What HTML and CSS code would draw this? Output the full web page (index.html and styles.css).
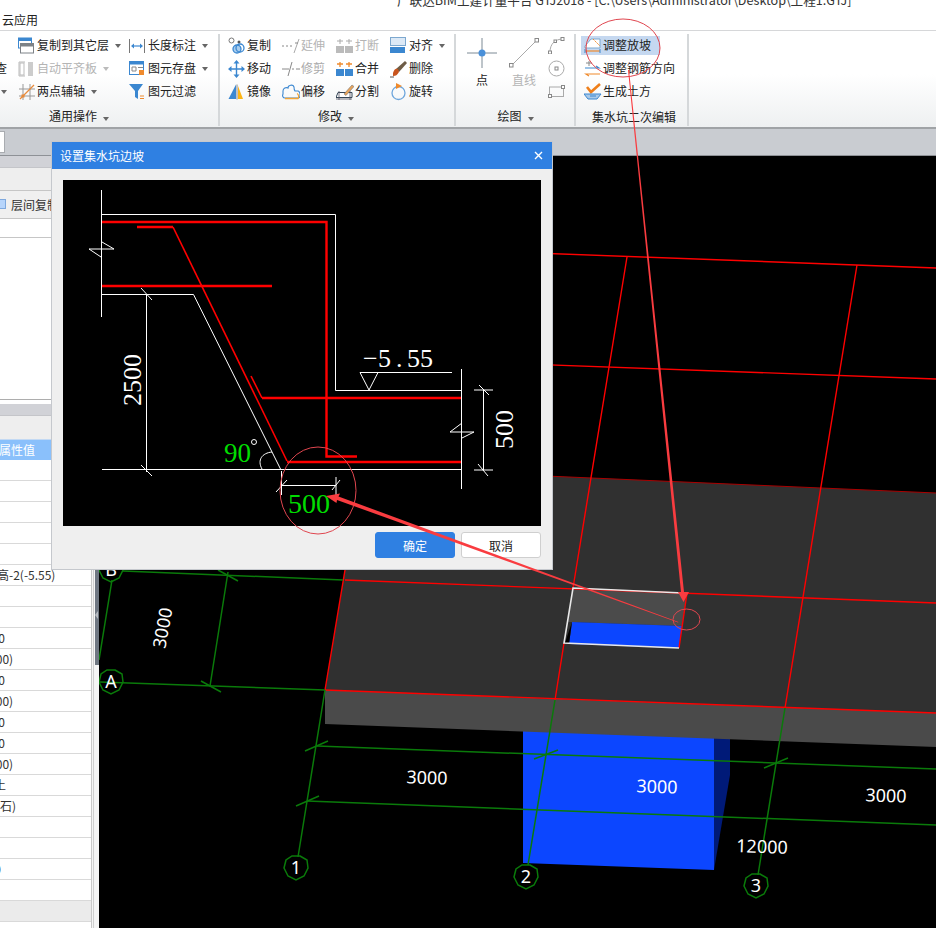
FILE: index.html
```html
<!DOCTYPE html>
<html lang="zh-CN">
<head>
<meta charset="utf-8">
<title>广联达BIM土建计量平台 GTJ2018</title>
<link rel="stylesheet" href="styles.css">
</head>
<body>
<div class="app">
  <div class="titlebar"><span>广联达BIM土建计量平台 GTJ2018 - [C:\Users\Administrator\Desktop\工程1.GTJ]</span></div>
  <div class="menubar">云应用</div>

  <div class="ribbon">
    <section class="group g1">
      <div class="cols">
        <div class="col c0">
          <div class="tool"></div>
          <div class="tool"><span>查</span></div>
          <div class="tool"><i class="caret"></i></div>
        </div>
        <div class="col c1">
          <div class="tool"><svg class="ico" viewBox="0 0 18 18"><rect x=".5" y="1" width="13" height="10" fill="#fff" stroke="#3b87d0"/><rect x=".5" y="1" width="13" height="3" fill="#3b87d0"/><rect x="2.5" y="6.5" width="13" height="9.5" fill="#fff" stroke="#7d8287"/><rect x="2.5" y="6.5" width="13" height="3" fill="#7d8287"/></svg><span>复制到其它层</span><i class="caret"></i></div>
          <div class="tool off"><svg class="ico" viewBox="0 0 18 18"><path d="M1 2v14M1 2h6M1 16h6" fill="none" stroke="#bbb"/><rect x="2" y="3" width="4" height="12" fill="#fff" stroke="#bbb"/><rect x="10" y="2" width="5" height="14" fill="#ccc"/></svg><span>自动平齐板</span><i class="caret"></i></div>
          <div class="tool"><svg class="ico" viewBox="0 0 18 18"><path d="M1 6h16M1 13h16M5 1v16M12 1v16" stroke="#999" fill="none"/><path d="M2 16L16 2" stroke="#e88a3a" stroke-width="1.2"/><rect x="3.5" y="11.5" width="3" height="3" fill="#e88a3a"/></svg><span>两点辅轴</span><i class="caret"></i></div>
        </div>
        <div class="col c2">
          <div class="tool"><svg class="ico" viewBox="0 0 18 18"><path d="M.5 2v14M15.5 2v14" stroke="#777" fill="none"/><path d="M3 9h10" stroke="#3b87d0" stroke-width="1.2"/><path d="M2 9l3-2.5v5zM14 9l-3-2.5v5z" fill="#3b87d0"/></svg><span>长度标注</span><i class="caret"></i></div>
          <div class="tool"><svg class="ico" viewBox="0 0 18 18"><rect x=".5" y="1.500" width="14" height="13" fill="#fff" stroke="#3b87d0"/><rect x=".5" y="1.500" width="14" height="3" fill="#3b87d0"/><path d="M3 7h4v4H3z" fill="none" stroke="#888"/><rect x="10" y="10" width="5" height="5" fill="#ef8a2c"/><rect x="9" y="7" width="5" height="1" fill="#888"/></svg><span>图元存盘</span><i class="caret"></i></div>
          <div class="tool"><svg class="ico" viewBox="0 0 18 18"><path d="M0 1h14L9 8v8L6 14V8z" fill="#3b87d0"/><path d="M11 13h4M11 15.500h4" stroke="#ef8a2c"/></svg><span>图元过滤</span></div>
        </div>
      </div>
      <div class="label">通用操作<i class="caret"></i></div>
    </section>

    <section class="group g2">
      <div class="cols">
        <div class="col c54">
          <div class="tool"><svg class="ico" viewBox="0 0 18 18"><circle cx="3.500" cy="3.500" r="2.500" fill="#fff" stroke="#777"/><circle cx="11" cy="5" r="1.500" fill="#555"/><circle cx="9" cy="12" r="4" fill="#a8cdee" stroke="#3b87d0" stroke-width="1.300"/><circle cx="12" cy="11" r="4" fill="none" stroke="#3b87d0" stroke-width="1.300"/></svg><span>复制</span></div>
          <div class="tool"><svg class="ico" viewBox="0 0 18 18"><path d="M8.500 3v12M2.500 9h12" stroke="#3b87d0" stroke-width="1.400"/><path d="M8.500 0l3 3.500h-6zM8.500 18l3-3.500h-6zM0 9l3.500-3v6zM17 9l-3.500-3v6z" fill="#3b87d0"/></svg><span>移动</span></div>
          <div class="tool"><svg class="ico" viewBox="0 0 18 18"><path d="M8 1.500v14.500H.5z" fill="#3b87d0"/><path d="M9 1.500v15" stroke="#888"/><path d="M10 3v13h5z" fill="#fcb414"/></svg><span>镜像</span></div>
        </div>
        <div class="col c54">
          <div class="tool off"><svg class="ico" viewBox="0 0 18 18"><path d="M0 9h2M4 9h2M8 9h2" stroke="#888"/><path d="M17 2l-5 14" stroke="#aaa"/><path d="M13 6h3" stroke="#888"/></svg><span>延伸</span></div>
          <div class="tool"><svg class="ico" viewBox="0 0 18 18"><path d="M0 9h7M10 9h2M14 9h2M16 9h2" stroke="#888"/><path d="M10 2L6 16" stroke="#888"/></svg><span class="dim">修剪</span></div>
          <div class="tool"><svg class="ico" viewBox="0 0 18 18"><path d="M1 8c0-3 3-4 5-3 0-3 5-4 6-1 0 3 0 3 1 4h3c1 0 2 2 2 3v2c0 2-1 2-2 2H3c-2 0-3-2-2-4z" fill="none" stroke="#3b87d0" stroke-width="1.100"/><path d="M3 15.500h13c1-1 1-4-1-5" fill="none" stroke="#f3a536" stroke-width="1.300"/></svg><span>偏移</span></div>
        </div>
        <div class="col c54">
          <div class="tool off"><svg class="ico" viewBox="0 0 18 18"><rect x="0" y="9" width="8" height="7" fill="#bbb"/><rect x="9" y="9" width="8" height="7" fill="#bbb"/><path d="M4 2v5M1 4h6M13 2v5M10 4h6" stroke="#aaa"/></svg><span>打断</span></div>
          <div class="tool"><svg class="ico" viewBox="0 0 18 18"><rect x="0" y="9" width="8" height="7" fill="#3b87d0"/><rect x="9" y="9" width="8" height="7" fill="#3b87d0"/><path d="M4 2v5M1 4h6M13 2v5M10 4h6" stroke="#ef8a2c" stroke-width="1.300"/></svg><span>合并</span></div>
          <div class="tool"><svg class="ico" viewBox="0 0 18 18"><path d="M2 9.500h14l0 5H0z" fill="#fff" stroke="#345"/><path d="M0 16h16M3 8v9M14 8v9" stroke="#556" stroke-width=".8" fill="none"/><path d="M8 11l8-9 2 1.500-8 9z" fill="#e9a45a" stroke="#777" stroke-width=".6"/></svg><span>分割</span></div>
        </div>
        <div class="col c54">
          <div class="tool"><svg class="ico" viewBox="0 0 18 18"><rect x=".5" y=".5" width="15" height="8" fill="#dce9f6" stroke="#7da8cf"/><rect x="0" y="10" width="15" height="6" fill="#3b87d0"/></svg><span>对齐</span><i class="caret"></i></div>
          <div class="tool"><svg class="ico" viewBox="0 0 18 18"><path d="M6 9l9-8 2 2-8 9z" fill="#6d5c46"/><path d="M3 13c1-4 3-5 5-4l1 3c-2 3-3 4-6 4z" fill="#c8541e"/><path d="M0 17h4" stroke="#555"/></svg><span>删除</span></div>
          <div class="tool"><svg class="ico" viewBox="0 0 18 18"><circle cx="8.500" cy="10" r="6.500" fill="none" stroke="#6ea6dc" stroke-width="1.300"/><path d="M6 0v6l6-3z" fill="#ef8a2c"/></svg><span>旋转</span></div>
        </div>
      </div>
      <div class="label">修改<i class="caret"></i></div>
    </section>

    <section class="group g3">
      <div class="cols">
        <div class="big">
          <svg class="ico30" viewBox="0 0 30 30"><path d="M0 15h30M15 0v30" stroke="#7d8a95" stroke-width="1"/><circle cx="15" cy="15" r="3.500" fill="#4a90d9"/></svg>
          <span>点</span>
        </div>
        <div class="big off">
          <svg class="ico30" viewBox="0 0 30 30"><path d="M2 28L28 2" stroke="#aaa"/><rect x=".5" y="25.500" width="3.500" height="3.500" fill="#fff" stroke="#888"/><rect x="26" y=".5" width="3.500" height="3.500" fill="#fff" stroke="#888"/></svg>
          <span>直线</span>
        </div>
        <div class="mini">
          <svg class="ico17" viewBox="0 0 17 17"><path d="M2 15C2 7 7 2 15 2" fill="none" stroke="#aaa"/><rect x=".5" y="14" width="3" height="3" fill="#fff" stroke="#888"/><rect x="13" y=".5" width="3" height="3" fill="#fff" stroke="#888"/><rect x="6" y="3" width="2.500" height="2.500" fill="#fff" stroke="#888"/></svg>
          <svg class="ico17" viewBox="0 0 17 17"><circle cx="8.500" cy="8.500" r="7.500" fill="none" stroke="#aaa"/><rect x="7" y="7" width="3" height="3" fill="#fff" stroke="#888"/></svg>
          <svg class="ico17" viewBox="0 0 17 13"><rect x="1.500" y="2" width="14" height="9.500" fill="none" stroke="#aaa"/><rect x=".5" y="9.500" width="3" height="3" fill="#fff" stroke="#888"/><rect x="13.500" y=".5" width="3" height="3" fill="#fff" stroke="#888"/></svg>
        </div>
      </div>
      <div class="label">绘图<i class="caret"></i></div>
    </section>

    <section class="group g4">
      <div class="cols">
        <div class="col">
          <div class="tool sel"><svg class="ico" viewBox="0 0 18 18"><path d="M1 9L7 2h9L16 11H1z" fill="#fff" stroke="#7da8cf"/><path d="M9 2l7 7" stroke="#ef8a2c" stroke-dasharray="2 1"/><path d="M1 14h15" stroke="#ef8a2c" stroke-width="1.200"/><path d="M1 12v4M16 12v4" stroke="#3b87d0"/></svg><span>调整放坡</span></div>
          <div class="tool"><svg class="ico" viewBox="0 0 18 18"><path d="M5 1v5M2 3h6" stroke="#888" fill="none"/><path d="M1 8h14l-3-2" stroke="#3b87d0" fill="none" stroke-width="1.100"/><path d="M16 14H2l3 2" stroke="#ef8a2c" fill="none" stroke-width="1.200"/></svg><span>调整钢筋方向</span></div>
          <div class="tool"><svg class="ico" viewBox="0 0 18 18"><path d="M3 4l4 5 9-8" fill="none" stroke="#ef7f1a" stroke-width="2.600"/><path d="M0 11h17l-4 5H4z" fill="#a9c9e8" stroke="#3b87d0"/><path d="M6 13h6" stroke="#3b87d0"/></svg><span>生成土方</span></div>
        </div>
      </div>
      <div class="label">集水坑二次编辑</div>
    </section>
  </div>

  <div class="strip"><div class="strip-input"></div></div>

  <div class="main">
    <aside class="panel">
      <div class="band"></div>
      <div class="pane-head"></div>
      <div class="pane-tools"><i class="check"></i><span>层间复制</span></div>
      <div class="pane-row"></div>
      <div class="pane-list"></div>
      <div class="band band-2"></div>
      <div class="pane-head pane-head-2"></div>
      <div class="prop-head">属性值</div>
      <div class="prop-row"></div>
      <div class="prop-row"></div>
      <div class="prop-row"></div>
      <div class="prop-row"></div>
      <div class="prop-row"></div>
      <div class="prop-row"><span class="cut-elev">底标高-2(-5.55)</span></div>
      <div class="prop-row"></div>
      <div class="prop-row"></div>
      <div class="prop-row"><span class="cut-0">500</span></div>
      <div class="prop-row"><span class="cut-00">(500)</span></div>
      <div class="prop-row"><span class="cut-0">500</span></div>
      <div class="prop-row"><span class="cut-00">(500)</span></div>
      <div class="prop-row"><span class="cut-0">500</span></div>
      <div class="prop-row"><span class="cut-0">500</span></div>
      <div class="prop-row"><span class="cut-00">(500)</span></div>
      <div class="prop-row"><span class="cut-tu">素土</span></div>
      <div class="prop-row"><span class="cut-shi">(碎石)</span></div>
      <div class="prop-row"></div>
      <div class="prop-row"></div>
      <div class="prop-row"><span class="cut-sliver">500</span></div>
      <div class="prop-row"></div>
      <div class="prop-row prop-grey"></div>
    </aside>
    <div class="gutter"><div class="scroll-thumb"><i class="notch"></i></div></div>
    <div class="canvas">
      <svg class="scene" width="837" height="772" viewBox="99 156 837 772">
        <polygon class="block" points="523,725 714,732 714,870 523,863"/>
        <polygon class="block-side" points="714,732 730,736 730,775 714,870"/>
        <polygon class="slab" points="325,690 362,468 936,493 936,713"/>
        <polygon class="slab-front" points="325,690 936,713 936,747 325,724"/>
        <polygon class="pit-wall" points="573,588 687,593 682,626 572,622 568,622"/>
        <polygon class="pit-water" points="572,622 682,626 679,648 569,644"/>
        <polygon class="pit-dark" points="572,622 569,644 565,643"/>

        <g class="red">
          <path d="M99 236.700L936 268M99 348.400L936 379"/>
          <path class="thin" d="M362 468L936 493"/>
          <path d="M627 257L573 588M564 643L555 700"/>
          <path d="M857 265L785 708"/>
          <path d="M362 468L325 690"/>
          <path d="M345 580L936 603"/>
          <path d="M325 690L936 713"/>
          <path d="M687 593L679 648"/>
        </g>
        <polyline class="pit-edge" points="683,593 573,588 564,643 679,648"/>

        <g class="grn">
          <path d="M123 571L343 580M100 682L325 690"/>
          <path d="M112 580L99 660M228 572L210 686"/>
          <path d="M218 570L238 581M201 681L221 692"/>
          <path d="M325 690L298 857M555 700L528 865M785 708L758 875"/>
          <path d="M317 746L936 769M307 801L936 825"/>
          <path d="M305 751L328 741M296 806L319 796M534 759L558 750M764 768L788 758"/>
          <polygon points="300,856 307,860 308,868 304,876 296,880 288,876 284,868 286,860 292,856" />
          <polygon points="530,865 537,869 538,877 534,885 526,889 518,885 514,877 516,869 522,865"/>
          <polygon points="760,874 767,878 768,886 764,894 756,898 748,894 744,886 746,878 752,874"/>
          <polygon points="115,670 122,674 123,682 119,690 111,694 103,690 99,682 101,674 107,670"/>
          <polygon points="115,558 122,562 123,570 119,578 111,582 103,578 99,570 101,562 107,558"/>
        </g>

        <g class="nums">
          <text x="427" y="784" transform="rotate(2 427 778)">3000</text>
          <text x="657" y="793" transform="rotate(2 657 787)">3000</text>
          <text x="886" y="802" transform="rotate(2 886 796)">3000</text>
          <text x="762" y="853" transform="rotate(2 762 847)">12000</text>
          <text x="163" y="634" transform="rotate(-80 163 628)">3000</text>
          <text x="296" y="874">1</text>
          <text x="526" y="883">2</text>
          <text x="756" y="892">3</text>
          <text x="111" y="688">A</text>
          <text x="111" y="576">B</text>
        </g>
      </svg>
    </div>
  </div>

  <div class="dialog">
    <div class="dlg-title"><span>设置集水坑边坡</span><svg class="dlg-close" viewBox="0 0 9 9"><path d="M1 1l7 7M8 1L1 8" stroke="#fff" stroke-width="1.400"/></svg></div>
    <div class="dlg-body">
      <svg class="drawing" width="478" height="346" viewBox="63 180 478 346">
        <g class="w">
          <path d="M101.500 190V317"/>
          <path d="M102 214.500H335.500V390.500H461"/>
          <path d="M102 242L114 249H89L101 257"/>
          <path d="M102 294.500H193.500L281 470"/>
          <path d="M146.500 294V472M141 288L152 300M141 465L152 476"/>
          <path d="M360 372.500H452M360 372.500L369 390L378 372.500"/>
          <path d="M461.500 369V489"/>
          <path d="M102 469.500H461"/>
          <path d="M462 423L450 432H474L462 438"/>
          <path d="M483.500 389V471M474 390H493M474 470H493M479 385L489 395M478 464L488 476"/>
          <path d="M281.500 471V495M336 477V495M281 485.500H336M276 492L287 480M332 490L340 480"/>
          <path d="M262 469C257 460 262 453 272 452"/>
        </g>
        <g class="r">
          <path class="r3" d="M102 222H326.500V456.500H357"/>
          <path class="r3" d="M137 227H173"/>
          <path d="M173 227L287 461"/>
          <path class="r3" d="M287 462H461"/>
          <path class="r3" d="M102 286H272"/>
          <path d="M251 376L262 398"/>
          <path class="r3" d="M262 398H461"/>
        </g>
        <text class="cad cad-w" transform="translate(141 406) rotate(-90)">2500</text>
        <text class="cad cad-w" transform="translate(513 449) rotate(-90)">500</text>
        <text class="cad cad-w" x="363 378 396 407 420" y="367">−5.55</text>
        <text class="cad cad-g cad-90" x="224" y="462">90</text>
        <circle class="deg" cx="254" cy="442" r="2.500"/>
        <text class="cad cad-g cad-l" x="288" y="513">500</text>
      </svg>
      <div class="dlg-actions">
        <button class="btn btn-ok" type="button">确定</button>
        <button class="btn" type="button">取消</button>
      </div>
    </div>
  </div>

  <svg class="marks" width="936" height="928" viewBox="0 0 936 928">
    <ellipse cx="623" cy="48" rx="37" ry="29"/>
    <ellipse cx="686.500" cy="619.500" rx="13.500" ry="10.500"/>
    <ellipse cx="318" cy="490.500" rx="38" ry="43.500"/>
    <polygon class="fill" points="628,70 629,70 684,592 689,592 683.500,602 678,592 681,592"/>
    <polygon class="fill" points="326,496 340,493.500 338.500,496.500 678.500,622 678,622.500 337,500 336.500,503"/>
  </svg>
</div>
</body>
</html>
```
FILE: styles.css
```css
* { box-sizing: border-box; }
html, body { margin: 0; padding: 0; }
body {
  width: 936px;
  height: 928px;
  overflow: hidden;
  background: #fff;
  font-family: "Noto Sans CJK SC", "Noto Sans", sans-serif;
  font-size: 12px;
  color: #222;
}
.app { position: relative; width: 936px; height: 928px; overflow: hidden; display: flex; flex-direction: column; }

.titlebar { height: 10px; padding-left: 397px; line-height: 0; font-size: 12.6px; white-space: nowrap; color: #333; overflow: hidden; }
.menubar { height: 21px; padding-left: 2px; line-height: 20px; border-bottom: 1px solid #d6d7d9; }

.ribbon {
  height: 98px;
  padding-top: 3px;
  display: flex;
  background: linear-gradient(#fff 45%, #eef0f1);
  border-bottom: 2px solid #a0a3a6;
}
.group { height: 92px; display: flex; flex-direction: column; border-right: 2px solid #d5d8da; flex: none; }
.g1 { width: 280px; margin-left: -60px; }
.g2 { width: 236px; padding-left: 8px; }
.g3 { width: 120px; padding-left: 11px; }
.g4 { width: 113px; padding-left: 5px; }
.cols { height: 71px; display: flex; flex: none; }
.col { display: flex; flex-direction: column; gap: 4px; padding-top: 2px; flex: none; }
.c0 { width: 78px; }
.c0 .tool { padding-left: 55px; }
.c1 { width: 111px; }
.c2 { width: 89px; }
.c54 { width: 54px; }
.tool { height: 19px; display: flex; align-items: center; white-space: nowrap; line-height: 19px; }
.tool span { margin-top: -2px; }
.tool.sel { background: #c5d8f0; width: 79px; }
.g4 .tool { padding-left: 3px; }
.off, .off span { color: #b4b4b4; }
.tool .dim { color: #aaa; }
.ico { width: 18px; height: 18px; margin-right: 1px; flex: none; }
.ico30 { width: 30px; height: 30px; display: block; }
.ico17 { width: 17px; height: 17px; display: block; }
.caret {
  display: inline-block;
  width: 0;
  height: 0;
  margin-left: 6px;
  border-left: 3.5px solid transparent;
  border-right: 3.5px solid transparent;
  border-top: 4px solid #666;
}
.off .caret { border-top-color: #bbb; }
.label { height: 21px; line-height: 22px; text-align: center; }
.g2 .label, .g3 .label { padding-right: 10px; }
.g4 .label { line-height: 24px; }
.big { width: 30px; padding-top: 4px; text-align: center; line-height: 23px; flex: none; }
.big + .big { margin-left: 12px; }
.mini { margin-left: 9px; padding-top: 3px; display: flex; flex-direction: column; gap: 6px; }

.strip { height: 27px; padding-top: 2px; background: #c9ccd1; border-bottom: 1px solid #8e9196; }
.strip-input { width: 5px; height: 22px; background: #fff; border: 1px solid #a9acb0; border-left: 0; }

.main { flex: 1; display: flex; min-height: 0; }
.panel { width: 92px; flex: none; background: #fff; border-right: 1px solid #c9c9c9; overflow: hidden; }
.band { height: 12px; background: #d1d2d7; border-bottom: 1px solid #c4c5c9; }
.band-2 { margin-top: 4px; }
.pane-head { height: 23px; background: #eee; border-bottom: 1px solid #c6c6c6; }
.pane-head-2 { border-bottom: 0; }
.pane-tools { height: 28px; background: #f0f0f0; border-bottom: 1px solid #c6c6c6; display: flex; align-items: center; gap: 5px; white-space: nowrap; color: #333; }
.check { width: 12px; height: 10px; margin-left: -6px; background: #b7d5fb; border: 1px solid #7fa9de; flex: none; margin-top: -1px; }
.pane-row { height: 19px; border-bottom: 1px solid #c6c6c6; }
.pane-list { height: 162px; border-bottom: 1px solid #adadad; }
.prop-head { height: 21px; line-height: 20px; background: #8ac0fb; color: #fff; margin-left: -1px; border-top: 1px solid #c3d9f3; }
.prop-row { height: 21px; line-height: 20px; border-bottom: 1px solid #d9d9d9; white-space: nowrap; color: #333; }
.prop-grey { background: #ebebeb; }
.prop-row span { display: inline-block; }
.cut-elev { margin-left: -27px; }
.cut-0 { margin-left: -15px; }
.cut-00 { margin-left: -15px; }
.cut-tu { margin-left: -18px; }
.cut-shi { margin-left: -16px; }
.cut-sliver { margin-left: -19px; }

.gutter { width: 7px; flex: none; background: #f5f5f5; position: relative; }
.scroll-thumb { width: 4px; height: 509px; margin-left: 3px; background: #6f7782; position: relative; }
.gutter::before { content: ""; position: absolute; left: 1px; top: 0; bottom: 0; width: 1px; background: #cfcfcf; }
.notch { position: absolute; left: 0; top: 455px; width: 0; height: 0; border-top: 4px solid transparent; border-bottom: 4px solid transparent; border-right: 3px solid #b8bcc2; }
.canvas { flex: 1; background: #000; overflow: hidden; }
.scene { display: block; }
.block { fill: #0c46ff; }
.block-side { fill: #001a78; }
.slab { fill: #303030; }
.slab-front { fill: #4a4a4a; }
.pit-wall { fill: #4b4b4b; }
.pit-water { fill: #0c46ff; }
.pit-dark { fill: #000; }
.pit-edge { fill: none; stroke: #e8e8e8; stroke-width: 1.6; }
.red path { fill: none; stroke: #f00; stroke-width: 1.4; }
.red .thin { stroke: #a00; stroke-width: 1; }
.grn path, .grn polygon { fill: none; stroke: #0a7a0a; stroke-width: 1.5; }
.nums text { fill: #fff; font-family: "Noto Sans", sans-serif; font-size: 18px; text-anchor: middle; }

.dialog {
  position: absolute;
  left: 51px;
  top: 141px;
  width: 502px;
  height: 429px;
  background: #efefef;
  border: 1px solid #c5c8cd;
  display: flex;
  flex-direction: column;
}
.dlg-title { height: 27px; flex: none; background: #2f80e2; color: #fff; display: flex; align-items: center; justify-content: space-between; padding: 0 9px 0 8px; line-height: 26px; }
.dlg-close { width: 9px; height: 9px; }
.dlg-body { padding: 11px 11px 0; }
.drawing { display: block; background: #000; }
.w path { fill: none; stroke: #fff; stroke-width: 1; }
.r path { fill: none; stroke: #f00; stroke-width: 1.6; }
.r .r3 { stroke-width: 2.4; }
.cad { font-family: "Liberation Serif", serif; font-size: 26px; }
.cad-w { fill: #fff; }
.cad-g { fill: #0d0; }
.cad-90 { font-size: 27px; }
.cad-l { font-size: 28px; }
.deg { fill: none; stroke: #fff; stroke-width: 1; }
.dlg-actions { margin-top: 6px; display: flex; justify-content: flex-end; gap: 6px; }
.btn { width: 80px; height: 26px; padding: 0; font: inherit; color: #222; background: #fff; border: 1px solid #cfcfcf; border-radius: 3px; }
.btn-ok { color: #fff; background: #2f80e2; border-color: #2f80e2; }

.marks { position: absolute; left: 0; top: 0; pointer-events: none; }
.marks ellipse { fill: none; stroke: #e0464f; stroke-width: 1; }
.marks .fill { fill: #f93c40; stroke: none; }
```
